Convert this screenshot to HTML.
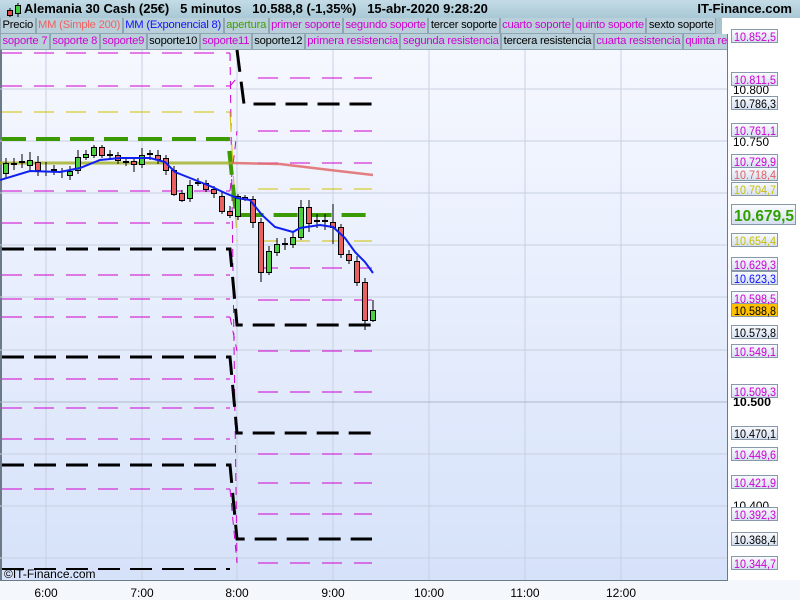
<!DOCTYPE html>
<html><head><meta charset="utf-8"><style>
body{margin:0;width:800px;height:600px;overflow:hidden;font-family:"Liberation Sans",sans-serif;background:#fff;position:relative}
#hdr{position:absolute;left:0;top:0;width:800px;height:18px;background:linear-gradient(#c4dce6,#a9c8d6);font-weight:bold;font-size:13px;line-height:18px}
.row{position:absolute;left:0;height:16px;display:flex;font-size:11.2px;line-height:15px;background:#a9c3cf;overflow:hidden;letter-spacing:-0.2px}
.row span{border:1px solid #8fa6b2;border-top:0;padding:0 1.5px;background:#b9d0da;white-space:nowrap}
.m{color:#d000d0}
</style></head><body>
<div id="hdr">
<svg style="position:absolute;left:6px;top:2px" width="16" height="16"><line x1="4" y1="6" x2="4" y2="15" stroke="#000"/><rect x="1.5" y="8.5" width="5" height="5" fill="#e05050" stroke="#000"/><line x1="12" y1="1" x2="12" y2="15" stroke="#000"/><rect x="9.5" y="3.5" width="5" height="8" fill="#40d040" stroke="#000"/></svg>
<span style="position:absolute;left:24px">Alemania 30 Cash (25€) &nbsp; 5 minutos &nbsp; 10.588,8 (-1,35%) &nbsp; 15-abr-2020 9:28:20</span>
<span style="position:absolute;right:8px">IT-Finance.com</span></div>
<div class="row" style="top:18px;width:722px"><span>Precio</span><span style="color:#f06060">MM (Simple 200)</span><span style="color:#1010ff">MM (Exponencial 8)</span><span style="color:#40a000">apertura</span><span class="m">primer soporte</span><span class="m">segundo soporte</span><span>tercer soporte</span><span class="m">cuarto soporte</span><span class="m">quinto soporte</span><span>sexto soporte</span></div>
<div class="row" style="top:34px;width:728px"><span class="m">soporte 7</span><span class="m">soporte 8</span><span class="m">soporte9</span><span>soporte10</span><span class="m">soporte11</span><span>soporte12</span><span class="m">primera resistencia</span><span class="m">segunda resistencia</span><span>tercera resistencia</span><span class="m">cuarta resistencia</span><span class="m">quinta resistencia</span></div>
<svg style="position:absolute;left:0;top:0" width="800" height="600" font-family="Liberation Sans" font-size="12">
<defs><linearGradient id="bg" x1="0" y1="0" x2="0" y2="1"><stop offset="0" stop-color="#f6f8ff"/><stop offset="1" stop-color="#d6e2fa"/></linearGradient>
<linearGradient id="bx" x1="0" y1="0" x2="0" y2="1"><stop offset="0" stop-color="#fafcff"/><stop offset="1" stop-color="#d4def0"/></linearGradient></defs>
<rect x="0" y="50" width="728" height="530" fill="url(#bg)"/>
<rect x="0" y="50" width="2" height="530" fill="#6a7a86"/>
<g stroke="#c8d0e0" stroke-width="1">
<line x1="46" y1="50" x2="46" y2="580"/><line x1="142" y1="50" x2="142" y2="580"/><line x1="237" y1="50" x2="237" y2="580"/><line x1="333" y1="50" x2="333" y2="580"/><line x1="429" y1="50" x2="429" y2="580"/><line x1="525" y1="50" x2="525" y2="580"/><line x1="621" y1="50" x2="621" y2="580"/>
<line x1="0" y1="89" x2="728" y2="89"/><line x1="0" y1="141" x2="728" y2="141"/><line x1="0" y1="193" x2="728" y2="193"/><line x1="0" y1="245" x2="728" y2="245"/><line x1="0" y1="297" x2="728" y2="297"/><line x1="0" y1="350" x2="728" y2="350"/><line x1="0" y1="402" x2="728" y2="402" stroke="#b0b8c8"/><line x1="0" y1="454" x2="728" y2="454"/><line x1="0" y1="506" x2="728" y2="506"/><line x1="0" y1="558" x2="728" y2="558"/>
</g>
<g stroke="#d000d0" stroke-width="1" stroke-dasharray="20,12" fill="none">
<path d="M2 53H230M2 86H230M2 191H230M2 223H230M2 275H230M2 299H230M2 317H230M2 379H230M2 408H230M2 439H230M2 489H230"/>
<path d="M258 78H372M258 131H372M258 163H372M258 268H372M258 300H372M258 351H372M258 392H372M258 454H372M258 483H372M258 514H372M258 563H372"/>
<path d="M230 53L237 563M230 86L237 78M230 489L237 563M230 191L237 131M230 317L237 351" stroke-dasharray="8,6"/>
</g>
<g stroke="#d0c000" stroke-width="1" stroke-dasharray="20,12" fill="none"><path d="M2 112H230M258 189H372M258 241H372M230 112L237 241"/></g>
<g stroke="#000" stroke-width="3" stroke-dasharray="22,10" fill="none">
<path d="M2 249H230L237 325H372M2 357H230L237 433H372M2 465H230L237 539H372"/>
<path d="M237 50L244 104H372"/>
<path d="M2 569H230" stroke-width="2"/>
</g>
<g stroke="#3a9a00" stroke-width="4" stroke-dasharray="24,10" fill="none"><path d="M2 139H228L236 215H372"/></g>
<path d="M0 163H232" stroke="#a0b020" stroke-width="3" opacity="0.8"/>
<path d="M232 163L280 164L330 170L373 175" stroke="#e06060" stroke-width="2.5" fill="none" opacity="0.8"/>
<g stroke="#000" stroke-width="1">
<path d="M6 158V178M14 158V170M22 154V168M30 152V170M38 156V176M46 162V176M54 165V175M62 168V178M70 166V180M78 150V174M86 150V160M94 145V158M102 145V158M110 150V160M118 152V164M126 158V166M134 158V172M142 148V168M150 150V160M158 150V164M166 155V175M174 166V196M182 190V202M190 180V202M198 178V186M206 180V192M214 186V198M222 192V214M230 206V218M238 194V220M245 195V201M253 196V228M261 218V282M269 246V275M277 238V256M285 238V250M293 232V248M301 200V240M309 200V232M317 214V228M325 214V230M333 204V244M341 224V258M349 250V264M357 256V286M365 278V330M373 300V322"/>
</g>
<g stroke="#000" stroke-width="1">
<g fill="#4cd040">
<rect x="3.5" y="163.5" width="5" height="10"/><rect x="27.5" y="160.5" width="5" height="5"/><rect x="67.5" y="171.5" width="5" height="4"/><rect x="75.5" y="157.5" width="5" height="13"/><rect x="83.5" y="154.5" width="5" height="3"/><rect x="91.5" y="147.5" width="5" height="8"/><rect x="139.5" y="155.5" width="5" height="9"/><rect x="187.5" y="185.5" width="5" height="13"/><rect x="235.5" y="196.5" width="5" height="20"/><rect x="266.5" y="251.5" width="5" height="21"/><rect x="274.5" y="244.5" width="5" height="8"/><rect x="290.5" y="237.5" width="5" height="7"/><rect x="298.5" y="207.5" width="5" height="30"/><rect x="370.5" y="310.5" width="5" height="10"/>
</g>
<g fill="#e86060">
<rect x="35.5" y="162.5" width="5" height="8"/><rect x="99.5" y="147.5" width="5" height="8"/><rect x="115.5" y="155.5" width="5" height="5"/><rect x="131.5" y="161.5" width="5" height="3"/><rect x="155.5" y="155.5" width="5" height="4"/><rect x="163.5" y="158.5" width="5" height="12"/><rect x="171.5" y="170.5" width="5" height="24"/><rect x="179.5" y="193.5" width="5" height="7"/><rect x="203.5" y="183.5" width="5" height="6"/><rect x="211.5" y="189.5" width="5" height="4"/><rect x="219.5" y="196.5" width="5" height="15"/><rect x="227.5" y="211.5" width="5" height="4"/><rect x="242.5" y="197.5" width="5" height="2"/><rect x="250.5" y="199.5" width="5" height="23"/><rect x="258.5" y="222.5" width="5" height="50"/><rect x="306.5" y="207.5" width="5" height="16"/><rect x="330.5" y="222.5" width="5" height="5"/><rect x="338.5" y="227.5" width="5" height="27"/><rect x="346.5" y="254.5" width="5" height="6"/><rect x="354.5" y="261.5" width="5" height="21"/><rect x="362.5" y="282.5" width="5" height="38"/>
</g>
<path d="M11 164H17M19 162H25M51 170H57M107 155H113M123 162H129M147 154H153M195 183H201M282 244H288M314 221H320M322 221H328" stroke-width="2"/>
</g>
<polyline points="0,180 30,171 60,172 80,168 100,160 120,158 150,158 165,162 175,172 190,178 210,186 225,193 237,198 250,200 262,215 275,227 293,232 300,228 320,225 333,227 345,238 355,252 365,262 373,273" fill="none" stroke="#1020f0" stroke-width="2"/>
<text x="4" y="578" font-size="12">©IT-Finance.com</text>
<rect x="0" y="580" width="800" height="20" fill="#f4f7fb"/>
<line x1="0" y1="580.5" x2="728" y2="580.5" stroke="#6a7a86"/>
<line x1="727.5" y1="34" x2="727.5" y2="581" stroke="#6a7a86"/>
<g font-size="12" text-anchor="middle"><text x="46" y="597">6:00</text><text x="142" y="597">7:00</text><text x="237" y="597">8:00</text><text x="333" y="597">9:00</text><text x="429" y="597">10:00</text><text x="525" y="597">11:00</text><text x="621" y="597">12:00</text></g>
<g font-size="12"><text x="733" y="94" textLength="36" lengthAdjust="spacingAndGlyphs">10.800</text><text x="733" y="146" textLength="36" lengthAdjust="spacingAndGlyphs">10.750</text><text x="733" y="406" font-weight="bold" textLength="38" lengthAdjust="spacingAndGlyphs">10.500</text><text x="733" y="510" textLength="36" lengthAdjust="spacingAndGlyphs">10.400</text></g>
<g font-size="12">
<g stroke="#8898a8" fill="url(#bx)">
<rect x="731.5" y="29.5" width="46" height="13"/><rect x="731.5" y="72.5" width="46" height="13"/><rect x="731.5" y="96.5" width="46" height="13"/><rect x="731.5" y="123.5" width="46" height="13"/><rect x="731.5" y="154.5" width="46" height="13"/><rect x="731.5" y="167.5" width="46" height="13"/><rect x="731.5" y="182.5" width="46" height="13"/><rect x="731.5" y="204.5" width="64" height="20"/><rect x="731.5" y="233.5" width="46" height="13"/><rect x="731.5" y="257.5" width="46" height="13"/><rect x="731.5" y="271.5" width="46" height="13"/><rect x="731.5" y="291.5" width="46" height="13"/><rect x="731.5" y="303.5" width="46" height="13" fill="#ffc000"/><rect x="731.5" y="325.5" width="46" height="13"/><rect x="731.5" y="344.5" width="46" height="13"/><rect x="731.5" y="384.5" width="46" height="13"/><rect x="731.5" y="426.5" width="46" height="13"/><rect x="731.5" y="447.5" width="46" height="13"/><rect x="731.5" y="475.5" width="46" height="13"/><rect x="731.5" y="507.5" width="46" height="13"/><rect x="731.5" y="532.5" width="46" height="13"/><rect x="731.5" y="556.5" width="46" height="13"/>
</g>
<g fill="#d000d0"><text x="734" y="41" textLength="42" lengthAdjust="spacingAndGlyphs">10.852,5</text><text x="734" y="84" textLength="42" lengthAdjust="spacingAndGlyphs">10.811,5</text><text x="734" y="135" textLength="42" lengthAdjust="spacingAndGlyphs">10.761,1</text><text x="734" y="166" textLength="42" lengthAdjust="spacingAndGlyphs">10.729,9</text><text x="734" y="269" textLength="42" lengthAdjust="spacingAndGlyphs">10.629,3</text><text x="734" y="303" textLength="42" lengthAdjust="spacingAndGlyphs">10.598,5</text><text x="734" y="356" textLength="42" lengthAdjust="spacingAndGlyphs">10.549,1</text><text x="734" y="396" textLength="42" lengthAdjust="spacingAndGlyphs">10.509,3</text><text x="734" y="459" textLength="42" lengthAdjust="spacingAndGlyphs">10.449,6</text><text x="734" y="487" textLength="42" lengthAdjust="spacingAndGlyphs">10.421,9</text><text x="734" y="519" textLength="42" lengthAdjust="spacingAndGlyphs">10.392,3</text><text x="734" y="568" textLength="42" lengthAdjust="spacingAndGlyphs">10.344,7</text></g>
<g fill="#000"><text x="734" y="108" textLength="42" lengthAdjust="spacingAndGlyphs">10.786,3</text><text x="734" y="315" textLength="42" lengthAdjust="spacingAndGlyphs">10.588,8</text><text x="734" y="337" textLength="42" lengthAdjust="spacingAndGlyphs">10.573,8</text><text x="734" y="438" textLength="42" lengthAdjust="spacingAndGlyphs">10.470,1</text><text x="734" y="544" textLength="42" lengthAdjust="spacingAndGlyphs">10.368,4</text></g>
<text x="734" y="179" fill="#e06060" textLength="42" lengthAdjust="spacingAndGlyphs">10.718,4</text>
<text x="734" y="194" fill="#c8c000" textLength="42" lengthAdjust="spacingAndGlyphs">10.704,7</text><text x="734" y="245" fill="#c8c000" textLength="42" lengthAdjust="spacingAndGlyphs">10.654,4</text>
<text x="734" y="283" fill="#1010ff" textLength="42" lengthAdjust="spacingAndGlyphs">10.623,3</text>
<text x="734" y="221" fill="#30a000" font-size="16" font-weight="bold" textLength="60" lengthAdjust="spacingAndGlyphs">10.679,5</text>
</g>
</svg>
</body></html>
